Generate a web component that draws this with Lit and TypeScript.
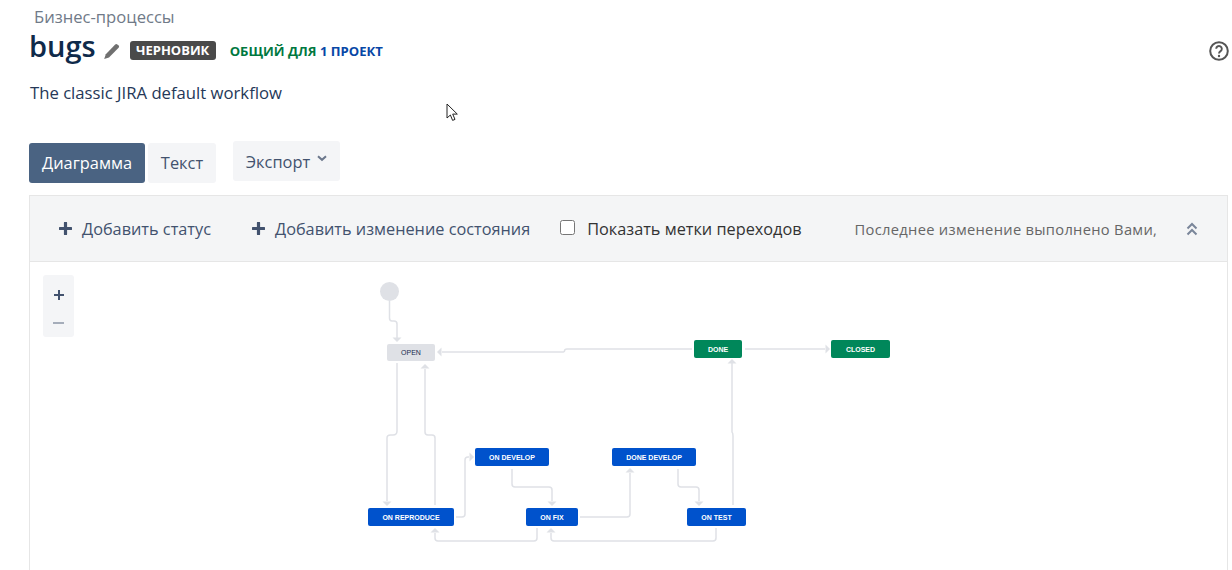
import { LitElement, css, html, svg } from 'lit';
import { customElement } from 'lit/decorators.js';

const nodes = [
  { label: 'OPEN', x: 387, y: 344, w: 48, h: 17, kind: 'todo' },
  { label: 'DONE', x: 694, y: 340, w: 48, h: 18, kind: 'done' },
  { label: 'CLOSED', x: 831, y: 340, w: 59, h: 18, kind: 'done' },
  { label: 'ON DEVELOP', x: 475, y: 448, w: 74, h: 18, kind: 'progress' },
  { label: 'DONE DEVELOP', x: 612, y: 448, w: 84, h: 18, kind: 'progress' },
  { label: 'ON REPRODUCE', x: 368, y: 508, w: 86, h: 18, kind: 'progress' },
  { label: 'ON FIX', x: 526, y: 508, w: 52, h: 18, kind: 'progress' },
  { label: 'ON TEST', x: 687, y: 508, w: 59, h: 18, kind: 'progress' }
];

// page coordinates, the svg sits on a canvas that starts at 0,0
const edges = [
  { d: 'M389.5 301V318Q389.5 321 392 321H394Q397 321 397 324V338', arrow: [397, 342, 'd'] },
  { d: 'M397 363V431Q397 435 393 435H390.5Q387 435 387 438V501', arrow: [387, 506, 'd'] },
  { d: 'M435 505V438Q435 435 432 435H428Q425 435 425 432V369', arrow: [425, 364, 'u'] },
  { d: 'M692 349H567Q564.5 349 564.5 351Q564.5 352 562 352H442', arrow: [437, 352, 'l'] },
  { d: 'M745 349H825', arrow: [830, 349, 'r'] },
  { d: 'M456 517H462Q465 517 465 514V460Q465 457 468 457H469', arrow: [474, 457, 'r'] },
  { d: 'M512 469V484Q512 487 515 487H549Q552 487 552 490V501', arrow: [552, 506, 'd'] },
  { d: 'M580 517H627Q630 517 630 514V473', arrow: [630, 468, 'u'] },
  { d: 'M678 469V484Q678 487 681 487H696Q699 487 699 490V501', arrow: [699, 506, 'd'] },
  { d: 'M733 505V436Q733 433 732 432V363', arrow: [732, 359, 'u'] },
  { d: 'M537 528V538Q537 541 534 541H438Q435 541 435 538V533', arrow: [435, 528, 'u'] },
  { d: 'M716 528V538Q716 541 713 541H554Q551 541 551 538V533', arrow: [551, 528, 'u'] }
] as { d: string; arrow: [number, number, string] }[];

const arrowHead = ([x, y, dir]: [number, number, string]) => {
  const s = 4.5;
  const points =
    dir === 'd' ? `${x - s},${y - s} ${x + s},${y - s} ${x},${y}`
    : dir === 'u' ? `${x - s},${y + s} ${x + s},${y + s} ${x},${y}`
    : dir === 'l' ? `${x + s},${y - s} ${x + s},${y + s} ${x},${y}`
    : `${x - s},${y - s} ${x - s},${y + s} ${x},${y}`;
  return svg`<polygon points=${points} fill="#dfe1e6"></polygon>`;
};

@customElement('app-root')
export class AppRoot extends LitElement {
  static styles = css`
    :host {
      display: block;
      position: relative;
      width: 1232px;
      height: 570px;
      overflow: hidden;
      background: #fff;
      font-family: 'Open Sans', 'Noto Sans', sans-serif;
      color: #42526e;
    }

    .page {
      display: flex;
      flex-direction: column;
      padding: 7px 4px 0 29px;
    }

    .crumb {
      margin-left: 5px;
      font-size: 16.6px;
      line-height: 20px;
      color: #707a88;
    }

    .title-row {
      display: flex;
      align-items: center;
      height: 40px;
    }

    h1 {
      margin: 0 0 2px 0;
      font-size: 29px;
      line-height: 36px;
      font-weight: 600;
      color: #0f2a4a;
    }

    .pencil {
      margin: 9px 0 0 7px;
    }

    .lozenge {
      margin: 7px 0 0 10px;
      width: 86px;
      height: 19px;
      line-height: 19px;
      text-align: center;
      border-radius: 3px;
      background: #4a4a4a;
      color: #fff;
      font-size: 13px;
      font-weight: 700;
    }

    .shared {
      margin: 7px 0 0 14px;
      font-size: 13.1px;
      font-weight: 700;
      color: #00783f;
    }

    .shared span {
      color: #0747a6;
    }

    .help {
      margin: 7px -1px 0 auto;
    }

    .desc {
      margin-top: 15px;
      padding-left: 1px;
      font-size: 16.7px;
      line-height: 22px;
      color: #253858;
    }

    .actions {
      display: flex;
      align-items: flex-start;
      margin-top: 39px;
    }

    .btn {
      display: flex;
      align-items: center;
      justify-content: center;
      box-sizing: border-box;
      height: 40px;
      border-radius: 3px;
      background: #f4f5f7;
      font-size: 16.4px;
    }

    .btn.active {
      width: 116px;
      padding-bottom: 2px;
      background: #4a6382;
      color: #fff;
    }

    .btn.text {
      width: 68px;
      margin-left: 3px;
      padding-bottom: 2px;
    }

    .btn.export {
      width: 107px;
      margin: -2px 0 0 17px;
      gap: 7px;
    }

    .btn.export svg {
      margin-top: -6px;
    }

    .panel {
      margin-top: 12px;
      height: 400px;
      border: 1px solid #e6e6e6;
      border-width: 1px 1px 0 1px;
    }

    .toolbar {
      display: flex;
      align-items: center;
      height: 65px;
      padding-left: 29px;
      background: #f4f5f6;
      border-bottom: 1px solid #e6e6e6;
      font-size: 16.3px;
      white-space: nowrap;
    }

    .add {
      display: flex;
      align-items: center;
      gap: 10px;
    }

    .add span {
      margin-top: 1px;
    }

    .add + .add {
      margin-left: 41px;
    }

    label {
      display: flex;
      align-items: center;
      margin: -3px 0 0 30px;
      gap: 12px;
      color: #333;
    }

    label span {
      margin-top: 4px;
    }

    input {
      width: 15px;
      height: 15px;
      margin: 0;
    }

    .updated {
      margin: 1px 0 0 53px;
      font-size: 14.7px;
      letter-spacing: 0.3px;
      color: #666;
    }

    .collapse {
      margin-left: 29px;
    }

    .zoom {
      display: flex;
      flex-direction: column;
      box-sizing: border-box;
      width: 31px;
      height: 62px;
      margin: 13px 0 0 13px;
      padding-top: 6px;
      border-radius: 3px;
      background: #f4f5f7;
    }

    .zoom span {
      flex: 1;
      display: flex;
      align-items: center;
      justify-content: center;
    }

    .canvas {
      position: absolute;
      inset: 0;
      pointer-events: none;
    }

    .node {
      position: absolute;
      display: flex;
      align-items: center;
      justify-content: center;
      border-radius: 2px;
      font-family: 'Liberation Sans', Arial, sans-serif;
      font-size: 7px;
      font-weight: 700;
      color: #fff;
      white-space: nowrap;
    }

    .node.todo {
      background: #dfe1e6;
      color: #172b4d;
      font-weight: 400;
    }

    .node.done {
      background: #00875a;
    }

    .node.progress {
      background: #0052cc;
    }

    .start {
      position: absolute;
      left: 380px;
      top: 282px;
      width: 19px;
      height: 19px;
      border-radius: 50%;
      background: #dfe1e6;
    }

    .cursor {
      position: absolute;
      left: 446px;
      top: 103px;
    }
  `;

  private plus() {
    return html`<svg width="13" height="13" viewBox="0 0 13 13"><path d="M6.5 1v11M1 6.5h11" stroke="#42526e" stroke-width="3.2" stroke-linecap="round"></path></svg>`;
  }

  render() {
    return html`
      <div class="page">
        <div class="crumb">Бизнес-процессы</div>
        <div class="title-row">
          <h1>bugs</h1>
          <svg class="pencil" width="17" height="17" viewBox="0 0 17 17">
            <path d="M12.2 1.4a1.6 1.6 0 0 1 2.2 0l1.2 1.2a1.6 1.6 0 0 1 0 2.2L6 14.4 1.2 16l1.6-4.8z" fill="#707070"></path>
          </svg>
          <div class="lozenge">ЧЕРНОВИК</div>
          <div class="shared">ОБЩИЙ ДЛЯ <span>1 ПРОЕКТ</span></div>
          <svg class="help" width="20" height="20" viewBox="0 0 20 20">
            <circle cx="10" cy="10" r="8.8" fill="none" stroke="#555" stroke-width="2"></circle>
            <path d="M7.2 7.8a2.8 2.8 0 1 1 4.4 2.3c-1 .7-1.6 1.1-1.6 2.3" fill="none" stroke="#555" stroke-width="1.9"></path>
            <circle cx="10" cy="15" r="1.2" fill="#555"></circle>
          </svg>
        </div>
        <div class="desc">The classic JIRA default workflow</div>
        <div class="actions">
          <div class="btn active">Диаграмма</div>
          <div class="btn text">Текст</div>
          <div class="btn export">
            Экспорт
            <svg width="10" height="7" viewBox="0 0 10 7"><path d="M1 1.2l4 3.6 4-3.6" fill="none" stroke="#6b778c" stroke-width="2"></path></svg>
          </div>
        </div>
        <div class="panel">
          <div class="toolbar">
            <div class="add">${this.plus()}<span>Добавить статус</span></div>
            <div class="add">${this.plus()}<span>Добавить изменение состояния</span></div>
            <label><input type="checkbox" /><span>Показать метки переходов</span></label>
            <div class="updated">Последнее изменение выполнено Вами,</div>
            <svg class="collapse" width="12" height="14" viewBox="0 0 12 14">
              <path d="M1.5 6.5L6 2l4.5 4.5M1.5 12.5L6 8l4.5 4.5" fill="none" stroke="#7a869a" stroke-width="2"></path>
            </svg>
          </div>
          <div class="zoom">
            <span><svg width="12" height="12" viewBox="0 0 12 12"><path d="M6 1v10M1 6h10" stroke="#42526e" stroke-width="2"></path></svg></span>
            <span><svg width="11" height="2" viewBox="0 0 11 2"><rect width="11" height="2" fill="#a5adba"></rect></svg></span>
          </div>
        </div>
      </div>
      <div class="canvas">
        <svg width="1232" height="570" viewBox="0 0 1232 570">
          ${edges.map(
            (e) => svg`<path d=${e.d} fill="none" stroke="#dfe1e6" stroke-width="1.5"></path>${arrowHead(e.arrow)}`
          )}
        </svg>
        <div class="start"></div>
        ${nodes.map(
          (n) => html`<div class="node ${n.kind}" style="left:${n.x}px;top:${n.y}px;width:${n.w}px;height:${n.h}px">${n.label}</div>`
        )}
      </div>
      <svg class="cursor" width="14" height="20" viewBox="0 0 14 20">
        <path d="M1 1v14l3.4-3 2.2 5.4 2.4-1-2.3-5.3h4.6z" fill="#fff" stroke="#222" stroke-width="1"></path>
      </svg>
    `;
  }
}
